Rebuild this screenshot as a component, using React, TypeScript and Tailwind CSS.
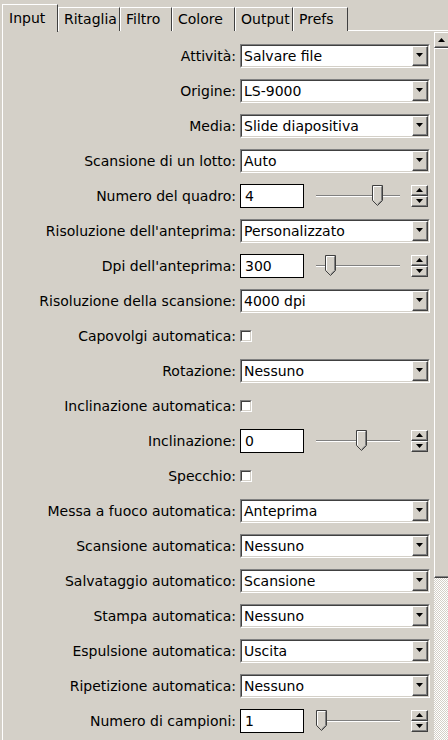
import React from 'react';

type Row =
  | { kind: 'select'; label: string; value: string }
  | { kind: 'number'; label: string; value: string; thumb: number }
  | { kind: 'check'; label: string };

const rows: Row[] = [
  { kind: 'select', label: 'Attività:', value: 'Salvare file' },
  { kind: 'select', label: 'Origine:', value: 'LS-9000' },
  { kind: 'select', label: 'Media:', value: 'Slide diapositiva' },
  { kind: 'select', label: 'Scansione di un lotto:', value: 'Auto' },
  { kind: 'number', label: 'Numero del quadro:', value: '4', thumb: 56 },
  { kind: 'select', label: "Risoluzione dell'anteprima:", value: 'Personalizzato' },
  { kind: 'number', label: "Dpi dell'anteprima:", value: '300', thumb: 9 },
  { kind: 'select', label: 'Risoluzione della scansione:', value: '4000 dpi' },
  { kind: 'check', label: 'Capovolgi automatica:' },
  { kind: 'select', label: 'Rotazione:', value: 'Nessuno' },
  { kind: 'check', label: 'Inclinazione automatica:' },
  { kind: 'number', label: 'Inclinazione:', value: '0', thumb: 40 },
  { kind: 'check', label: 'Specchio:' },
  { kind: 'select', label: 'Messa a fuoco automatica:', value: 'Anteprima' },
  { kind: 'select', label: 'Scansione automatica:', value: 'Nessuno' },
  { kind: 'select', label: 'Salvataggio automatico:', value: 'Scansione' },
  { kind: 'select', label: 'Stampa automatica:', value: 'Nessuno' },
  { kind: 'select', label: 'Espulsione automatica:', value: 'Uscita' },
  { kind: 'select', label: 'Ripetizione automatica:', value: 'Nessuno' },
  { kind: 'number', label: 'Numero di campioni:', value: '1', thumb: 0 },
];

const tabs = [
  { name: 'Input', w: 'w-[56px]' },
  { name: 'Ritaglia', w: 'w-[62px]' },
  { name: 'Filtro', w: 'w-[52px]' },
  { name: 'Colore', w: 'w-[63px]' },
  { name: 'Output', w: 'w-[58px]' },
  { name: 'Prefs', w: 'w-[55px]' },
];

function Arrow({ up = false }: { up?: boolean }) {
  return (
    <svg width="7" height="4" viewBox="0 0 7 4">
      <polygon points={up ? '3.5,0 7,4 0,4' : '0,0 7,0 3.5,4'} fill="#000" />
    </svg>
  );
}

// classic raised 3d button face
function Raised({ className, children }: { className: string; children?: React.ReactNode }) {
  return (
    <div className={`border border-t-white border-l-white border-r-[#404040] border-b-[#404040] bg-[#d4d0c8] ${className}`}>
      <div className="flex h-full w-full items-center justify-center border-r border-b border-[#808080]">
        {children}
      </div>
    </div>
  );
}

function Select({ value }: { value: string }) {
  return (
    <div className="h-[24px] w-[190px] border border-t-[#808080] border-l-[#808080] border-r-white border-b-white">
      <div className="flex h-full items-center border border-t-[#404040] border-l-[#404040] border-r-[#d4d0c8] border-b-[#d4d0c8] bg-white">
        <span className="flex-1 pl-[2px] leading-none">{value}</span>
        <Raised className="h-[20px] w-[16px]">
          <Arrow />
        </Raised>
      </div>
    </div>
  );
}

function Slider({ thumb }: { thumb: number }) {
  return (
    <div className="relative ml-[12px] h-[24px] w-[84px]">
      <div className="absolute left-0 right-0 top-[11px] h-[2px] border-t border-[#808080] bg-white" />
      <svg
        className="absolute top-[1px]"
        style={{ left: thumb }}
        width="11"
        height="21"
        viewBox="0 0 11 21"
      >
        <polygon points="0.5,0.5 10.5,0.5 10.5,15.5 5.5,20.5 0.5,15.5" fill="#d4d0c8" stroke="#404040" />
        <polyline points="1.5,15 1.5,1.5 9.5,1.5" fill="none" stroke="#fff" />
        <polyline points="9.5,1.5 9.5,15.3 5.5,19.3" fill="none" stroke="#808080" />
      </svg>
    </div>
  );
}

function Spin() {
  return (
    <div className="ml-[11px] flex flex-col">
      <Raised className="h-[11px] w-[17px]">
        <Arrow up />
      </Raised>
      <Raised className="h-[11px] w-[17px]">
        <Arrow />
      </Raised>
    </div>
  );
}

function NumberField({ value, thumb }: { value: string; thumb: number }) {
  return (
    <div className="flex items-center">
      <div className="flex h-[24px] w-[64px] items-center border border-black bg-white pl-[4px] leading-none">
        {value}
      </div>
      <Slider thumb={thumb} />
      <Spin />
    </div>
  );
}

function Check() {
  return (
    <div className="h-[12px] w-[12px] border border-t-[#808080] border-l-[#808080] border-r-white border-b-white">
      <div className="h-full w-full border border-t-[#404040] border-l-[#404040] border-r-[#d4d0c8] border-b-[#d4d0c8] bg-white" />
    </div>
  );
}

export default function App() {
  return (
    <div className="h-[740px] w-[448px] overflow-hidden bg-[#d4d0c8] font-['DejaVu_Sans',sans-serif] text-[14px] text-black">
      {/* Tabs */}
      <div className="flex h-[31px] items-end pl-[2px]">
        {tabs.map((t, i) =>
          i === 0 ? (
            <div
              key={t.name}
              className={`${t.w} -mb-px flex h-[28px] items-start border-l border-t border-white border-r border-r-[#404040] bg-[#d4d0c8] pl-[6px] pt-[3px]`}
            >
              {t.name}
            </div>
          ) : (
            <div
              key={t.name}
              className={`${t.w} flex h-[24px] items-start border-l border-t border-white border-r border-r-[#404040] pl-[5px] pt-[1px]`}
            >
              {t.name}
            </div>
          ),
        )}
        <div className="h-px flex-1 bg-white" />
      </div>

      {/* Panel */}
      <div className="flex h-[709px] border-l border-white ml-[2px]">
        <div className="flex-1 pt-[7px]">
          {rows.map((r) => (
            <div key={r.label} className="flex h-[35px] items-center">
              <div className="w-[234px] whitespace-nowrap pr-[1px] text-right leading-none">{r.label}</div>
              <div className="ml-[3px]">
                {r.kind === 'select' && <Select value={r.value} />}
                {r.kind === 'number' && <NumberField value={r.value} thumb={r.thumb} />}
                {r.kind === 'check' && <Check />}
              </div>
            </div>
          ))}
        </div>

        {/* Scrollbar */}
        <div className="mt-[1px] flex w-[14px] flex-col">
          <Raised className="h-[16px] w-[16px]">
            <Arrow up />
          </Raised>
          <Raised className="h-[530px] w-[16px]" />
          <div className="w-[16px] flex-1 bg-[repeating-conic-gradient(#ffffff_0_25%,#d4d0c8_0_50%)] bg-[length:2px_2px]" />
        </div>
      </div>
    </div>
  );
}
